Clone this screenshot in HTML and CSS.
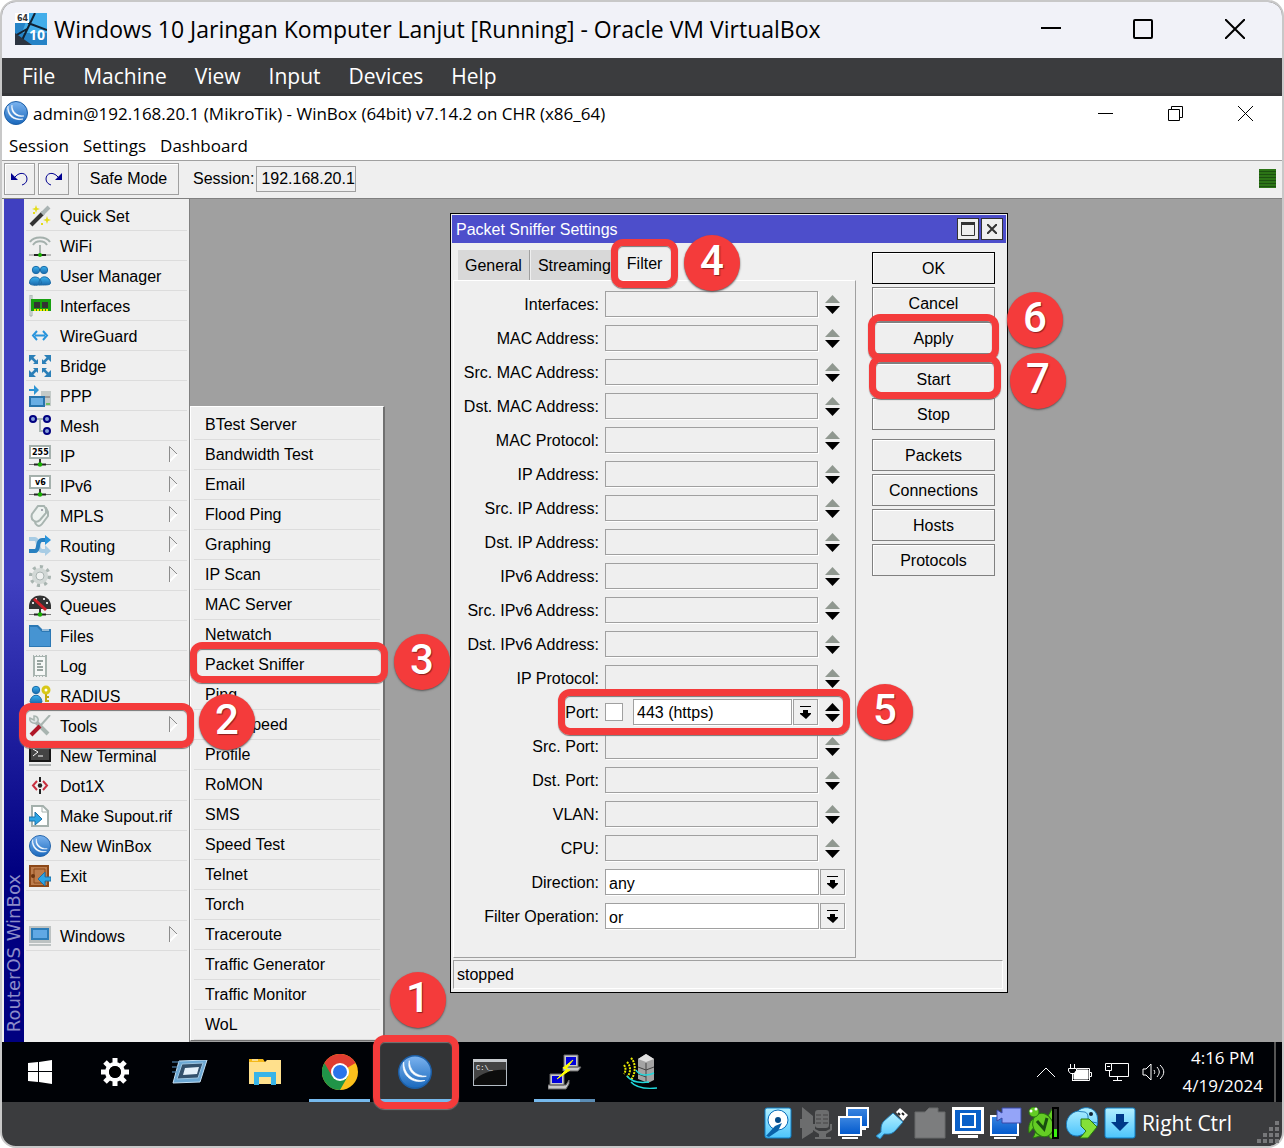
FILE: index.html
```html
<!DOCTYPE html>
<html lang="en">
<head>
    <meta charset="UTF-8">
    <meta name="viewport" content="width=device-width, initial-scale=1.0">
    <title>Packet Sniffer Settings</title>
    <link rel="stylesheet" href="styles.css">
</head>
<body>
    <!-- shared shapes -->
    <svg class="defs" aria-hidden="true">
        <defs>
            <linearGradient id="blue" x1="0" y1="0" x2="0" y2="1"><stop offset="0" stop-color="#3cb4f0"/><stop offset="1" stop-color="#1a68ac"/></linearGradient>
            <linearGradient id="orb" x1="0" y1="0" x2="0" y2="1"><stop offset="0" stop-color="#7cb4f0"/><stop offset="1" stop-color="#1a68bc"/></linearGradient>
            <linearGradient id="light" x1="0" y1="0" x2="0" y2="1"><stop offset="0" stop-color="#b4f0ff"/><stop offset="1" stop-color="#4cc4fc"/></linearGradient>
            <linearGradient id="screen" x1="0" y1="0" x2="0" y2="1"><stop offset="0" stop-color="#3c86e0"/><stop offset="1" stop-color="#0058cc"/></linearGradient>
        </defs>
        <symbol id="spin" viewBox="0 0 15 19">
            <path class="up" d="M7.500 0 15 8H0z"/><path d="M0 11h15L7.500 19z"/>
        </symbol>
        <symbol id="drop" viewBox="0 0 11 13">
            <path d="M0 0h11v1H0zM3 4h5v3h3v1l-5 5-6-5V7h3z"/>
        </symbol>
        <symbol id="more" viewBox="0 0 9 16">
            <path d="M8 8 .5 15.500" fill="none" stroke="#fff" stroke-width="2"/><path d="M.5 16V.5L8 8" fill="none" stroke="#8c8c8c"/>
        </symbol>
        <symbol id="winbox" viewBox="0 0 24 24">
            <circle cx="12" cy="12" r="11.500" fill="url(#orb)" stroke="#1c5ea6"/>
            <path d="M8 4c0 6 4 11 12 11-8 2-14-4-12-11zM4 5c0 8 6 14 15 13C9 21 2 13 4 5z" fill="#fff" stroke="#fff" stroke-width=".5"/>
        </symbol>
        <symbol id="node" viewBox="0 0 22 22">
            <path d="M11 14v5" stroke="#333" stroke-width="2"/><path d="M0 19.500h22" stroke="#777"/><path d="M5 19.500h12" stroke="#222" stroke-width="2"/><circle cx="11" cy="19.500" r="2.200" fill="#18b000"/>
        </symbol>
    </svg>

    <div class="vm">
        <header class="vm-title">
            <svg width="32" height="32" viewBox="0 0 32 32">
                <rect width="32" height="32" fill="#2583c7"/><path d="M14 0h18v20H7z" fill="#43aeea"/><path d="M20 0 9 23l-4 9M13 10l19 7M0 23l12-7" fill="none" stroke="#123" stroke-width="2"/><path d="M0 20 17 32H0z" fill="#2c3440"/>
                <rect width="14" height="10" fill="#fff"/><text x="2" y="8" font-size="8" font-weight="bold" font-family="DejaVu Sans" fill="#333">64</text><text x="14" y="27" font-size="14" font-weight="bold" font-family="Open Sans" fill="#fff">10</text>
            </svg>
            <h1>Windows 10 Jaringan Komputer Lanjut [Running] - Oracle VM VirtualBox</h1>
            <div class="vm-controls">
                <button type="button" aria-label="Minimize"><svg width="20" height="20"><path d="M0 9h20"/></svg></button>
                <button type="button" aria-label="Maximize"><svg width="20" height="20"><rect x="1" y="1" width="18" height="18" rx="1"/></svg></button>
                <button type="button" aria-label="Close"><svg width="20" height="20"><path d="m0 0 20 20M20 0 0 20"/></svg></button>
            </div>
        </header>
        <nav class="vm-menu">
            <a href="#">File</a><a href="#">Machine</a><a href="#">View</a><a href="#">Input</a><a href="#">Devices</a><a href="#">Help</a>
        </nav>

        <div class="wb-title">
            <svg width="24" height="24"><use href="#winbox"/></svg>
            <h2>admin@192.168.20.1 (MikroTik) - WinBox (64bit) v7.14.2 on CHR (x86_64)</h2>
            <div class="wb-controls">
                <button type="button" aria-label="Minimize"><svg width="15" height="15"><path d="M0 7.500h15"/></svg></button>
                <button type="button" aria-label="Restore"><svg width="15" height="15"><path d="M.5 3.500h11v11H.5zM3.500 3.500v-3h11v11h-3"/></svg></button>
                <button type="button" aria-label="Close"><svg width="15" height="15"><path d="m0 0 15 15M15 0 0 15"/></svg></button>
            </div>
        </div>
        <nav class="wb-menu">
            <a href="#">Session</a><a href="#">Settings</a><a href="#">Dashboard</a>
        </nav>
        <div class="toolbar">
            <button type="button" class="tool" aria-label="Undo"><svg width="17" height="14"><path d="M4 5c5-6 12-4 12 2 0 3-2 5-5 6" fill="none" stroke="#000090"/><path d="M0 1v7h7z" fill="#000090"/></svg></button>
            <button type="button" class="tool" aria-label="Redo"><svg width="17" height="14"><path d="M13 5C8-1 1 1 1 7c0 3 2 5 5 6" fill="none" stroke="#000090"/><path d="M17 1v7h-7z" fill="#000090"/></svg></button>
            <button type="button" class="safe">Safe Mode</button>
            <label for="session">Session:</label>
            <input type="text" id="session" value="192.168.20.1" readonly>
            <span class="load"></span>
        </div>

        <main class="workspace">
            <div class="brand"><span>RouterOS WinBox</span></div>
            <ul class="menu">
                <li><svg viewBox="0 0 22 22"><path d="m2 20 12-12" stroke="#333" stroke-width="4"/><path d="m13 9 7-7" stroke="#aab4b4" stroke-width="4"/><path d="m7 0 1 3 3 1-3 1-1 3-1-3-3-1 3-1zM18 11l1 3 3 1-3 1-1 3-1-3-3-1 3-1zM4 7h2v2H4zM12 18h2v2h-2z" fill="#e4dc18"/></svg><a href="#">Quick Set</a></li>
                <li><svg viewBox="0 0 22 22"><path d="M1 7c4-6 16-6 20 0M4 10c3-5 11-5 14 0" fill="none" stroke="#a4b0ac" stroke-width="2"/><path d="M11 10v9" stroke="#aab4b0" stroke-width="2"/><path d="M0 20h22" stroke="#888"/><path d="M5 20h12" stroke="#222" stroke-width="2"/><circle cx="11" cy="20" r="2" fill="#18b000"/></svg><a href="#">WiFi</a></li>
                <li><svg viewBox="0 0 22 22"><g fill="url(#blue)" stroke="#1c6ca8"><circle cx="7" cy="5" r="3.700"/><circle cx="15" cy="5" r="3.700"/><path d="M10 20c-1-11 11-10 11.500-2 0 2-3 2-11 2zM.5 18c0-8 11-8 12 0 0 3-12 3-12 0z"/></g></svg><a href="#">User Manager</a></li>
                <li><svg viewBox="0 0 22 22"><path d="M1 0h2v21H1z" fill="#dfe6e4" stroke="#a4b0ac"/><path d="M2 4h20v12H2z" fill="#18a010"/><path d="M5 7h6v6H5zM13 7h6v6h-6z" fill="#333"/><path d="M5 15h14" stroke="#f4e400" stroke-width="2" stroke-dasharray="2 1"/></svg><a href="#">Interfaces</a></li>
                <li><svg viewBox="0 0 22 22"><path d="M8 6 4 10.500 8 15M14 6l4 4.500-4 4.500M6 10.500h10" fill="none" stroke="#2894dc" stroke-width="2"/></svg><a href="#">WireGuard</a></li>
                <li><svg viewBox="0 0 22 22"><path d="m1 1 7 7M21 1l-7 7M1 21l7-7M21 21l-7-7" stroke="#2c80b8" stroke-width="2.500"/><path d="M0 0h7L0 7zM22 0v7l-7-7zM0 22v-7l7 7zM22 22h-7l7-7zM9 9H4l5-5zM13 9V4l5 5zM9 13v5l-5-5zM13 13h5l-5 5z" fill="#2c80b8"/></svg><a href="#">Bridge</a></li>
                <li><svg viewBox="0 0 22 22"><path d="M0 4h5V0l5 5-5 5V6H0z" fill="#2c94d4"/><path d="M12 6h10v15H12z" fill="#c4cac8"/><path d="M15 12h6" stroke="#999" stroke-width="2"/><path d="M17 19h4" stroke="#18b000"/><path d="M1 12h14v9H1z" fill="#68aee4" stroke="#2874ac" stroke-width="2"/></svg><a href="#">PPP</a></li>
                <li><svg viewBox="0 0 22 22"><path d="M4 4h14M11 4v12h7" fill="none" stroke="#a8b4b0" stroke-width="2"/><g fill="#86a0d8" stroke="#000080" stroke-width="2"><circle cx="4" cy="4" r="3"/><circle cx="18" cy="4" r="3"/><circle cx="18" cy="16" r="3"/></g></svg><a href="#">Mesh</a></li>
                <li><svg viewBox="0 0 22 22"><use href="#node"/><path d="M1 1h20v12H1z" fill="#fff" stroke="#a4b0ac" stroke-width="2"/><text x="3" y="10" class="tiny">255</text></svg><a href="#">IP</a><svg class="more"><use href="#more"/></svg></li>
                <li><svg viewBox="0 0 22 22"><use href="#node"/><path d="M1 1h20v12H1z" fill="#fff" stroke="#a4b0ac" stroke-width="2"/><text x="6" y="10" class="tiny">v6</text></svg><a href="#">IPv6</a><svg class="more"><use href="#more"/></svg></li>
                <li><svg viewBox="0 0 22 22"><g fill="#eef2f0" stroke="#a8b4b0" stroke-width="2"><path d="m6 14 7-11h4l2 4v4l-6 8c-3 4-8 1-7-5z"/><path d="M3 9 9 1h6l2 3v4l-6 7c-4 4-10 0-8-6z"/></g><circle cx="13" cy="5" r="1" fill="#889"/></svg><a href="#">MPLS</a><svg class="more"><use href="#more"/></svg></li>
                <li><svg viewBox="0 0 22 22"><path d="M0 4h6c4 0 2 12 7 12h5" fill="none" stroke="#a8cce4" stroke-width="4"/><path d="m16 10 6 6-6 5z" fill="#a8cce4"/><path d="M0 16h6c5 0 1-11 7-11h4" fill="none" stroke="#2880c0" stroke-width="4"/><path d="m16 0 6 5-6 5z" fill="#2894dc"/></svg><a href="#">Routing</a><svg class="more"><use href="#more"/></svg></li>
                <li><svg viewBox="0 0 22 22"><circle cx="11" cy="11" r="9" fill="none" stroke="#a8b4b0" stroke-width="4" stroke-dasharray="3 4"/><circle cx="11" cy="11" r="6" fill="none" stroke="#d2d8d6" stroke-width="4"/><circle cx="11" cy="11" r="4" fill="#eff1f0" stroke="#aab4b2"/></svg><a href="#">System</a><svg class="more"><use href="#more"/></svg></li>
                <li><svg viewBox="0 0 22 22"><use href="#node"/><path d="M0 14C-2-4 24-4 22 14z" fill="#333"/><path d="M3 8h2M6 4h2M14 4h2M17 8h2" stroke="#ddd" stroke-width="2"/><path d="m5 4 12 11" stroke="#d02028" stroke-width="3"/></svg><a href="#">Queues</a></li>
                <li><svg viewBox="0 0 22 22"><path d="M0 0h9l4 4h9v18H0z" fill="#2c78b4"/><path d="M1 2h7l5 5h8v14H1z" fill="#4694d2"/><path d="M13 5h7" stroke="#fff"/></svg><a href="#">Files</a></li>
                <li><svg viewBox="0 0 22 22"><path d="M5 1h12v20H5z" fill="#f6f8f7" stroke="#a8b4b0" stroke-width="2"/><path d="M5 0h12M5 22h12" stroke="#efefef" stroke-width="2" stroke-dasharray="2 1"/><path d="M8 6h6M8 9h4M8 12h6M8 15h6" stroke="#98a4a0" stroke-width="2"/></svg><a href="#">Log</a></li>
                <li><svg viewBox="0 0 22 22"><g fill="url(#blue)" stroke="#1c6ca8"><circle cx="7" cy="5" r="3.700"/><path d="M1 17c1-9 11-9 12 0 0 2-12 2-12 0z"/></g><path d="M17 8v9M17 12h3M17 16h3" stroke="#c0a810" stroke-width="2"/><circle cx="17" cy="5" r="3" fill="#fff" stroke="#d8c818" stroke-width="3"/></svg><a href="#">RADIUS</a></li>
                <li>
                    <svg viewBox="0 0 22 22"><path d="m7 7 12 12" stroke="#a8b4b0" stroke-width="4"/><path d="M5 1c4 0 6 5 2 7-4 1-7-2-6-5l4 2z" fill="#dfe6e4" stroke="#a8b4b0" stroke-width="1.500"/><path d="m21 0-9 10" stroke="#a8b4b0" stroke-width="2"/><path d="m2 20 9-9" stroke="#b01828" stroke-width="4"/></svg><a href="#">Tools</a><svg class="more"><use href="#more"/></svg>
                    <span class="ring ring-tools"></span><span class="step step-tools">2</span>
                </li>
                <li><svg viewBox="0 0 22 22"><path d="M0 19h22v2H0z" fill="#b0b4b4"/><path d="M1 1h20v15H1z" fill="#444" stroke="#181818" stroke-width="2"/><path d="m4 4 5 3-5 4M9 11h5" fill="none" stroke="#fff"/></svg><a href="#">New Terminal</a></li>
                <li><svg viewBox="0 0 22 22"><path d="M8 6 4 10.500 8 15M14 6l4 4.500-4 4.500" fill="none" stroke="#c83040" stroke-width="2"/><path d="M11 2v5M11 14v5" stroke="#222" stroke-width="2"/><circle cx="11" cy="10.500" r="2.200" fill="#222"/></svg><a href="#">Dot1X</a></li>
                <li><svg viewBox="0 0 22 22"><path d="M3 1h11l5 5v15H3z" fill="#fff" stroke="#a4b0ac" stroke-width="2"/><path d="M13 1v6h6" fill="none" stroke="#a4b0ac"/><path d="M0 12h6V7l7 7-7 6v-4H0z" fill="#2ca4e4" stroke="#1c70a8"/></svg><a href="#">Make Supout.rif</a></li>
                <li><svg viewBox="0 0 24 24"><use href="#winbox"/></svg><a href="#">New WinBox</a></li>
                <li><svg viewBox="0 0 22 22"><path d="M1 1h18v20H1z" fill="#bc7c4c" stroke="#8c4818" stroke-width="2"/><path d="M5 4h11v14H5z" fill="none" stroke="#8c4818"/><circle cx="4" cy="11" r="2" fill="#6c3410"/><path d="M22 12h-6V7l-7 7 7 7v-5h6z" fill="#2ca4e4" stroke="#1c70a8"/></svg><a href="#">Exit</a></li>
                <li></li>
                <li><svg viewBox="0 0 22 22"><path d="M0 1h22v17H0zM0 19h22v2H0z" fill="#bcc2c2"/><path d="M3 4h16v10H3z" fill="#60a8e4" stroke="#2c7cb8" stroke-width="2"/></svg><a href="#">Windows</a><svg class="more"><use href="#more"/></svg></li>
            </ul>

            <section class="desktop">
                <ul class="submenu">
                    <li><a href="#">BTest Server</a></li>
                    <li><a href="#">Bandwidth Test</a></li>
                    <li><a href="#">Email</a></li>
                    <li><a href="#">Flood Ping</a></li>
                    <li><a href="#">Graphing</a></li>
                    <li><a href="#">IP Scan</a></li>
                    <li><a href="#">MAC Server</a></li>
                    <li><a href="#">Netwatch</a></li>
                    <li><a href="#">Packet Sniffer</a><span class="ring ring-sniffer"></span><span class="step step-sniffer">3</span></li>
                    <li><a href="#">Ping</a></li>
                    <li><a href="#">Ping Speed</a></li>
                    <li><a href="#">Profile</a></li>
                    <li><a href="#">RoMON</a></li>
                    <li><a href="#">SMS</a></li>
                    <li><a href="#">Speed Test</a></li>
                    <li><a href="#">Telnet</a></li>
                    <li><a href="#">Torch</a></li>
                    <li><a href="#">Traceroute</a></li>
                    <li><a href="#">Traffic Generator</a></li>
                    <li><a href="#">Traffic Monitor</a></li>
                    <li><a href="#">WoL</a></li>
                </ul>

                <form class="dialog">
                    <div class="dialog-title">
                        <h3>Packet Sniffer Settings</h3>
                        <button type="button" aria-label="Maximize"><svg width="14" height="14"><path d="M.5 1v12.500h13V1" fill="none" stroke="#333"/><path d="M0 0h14v3H0z" fill="#333"/></svg></button>
                        <button type="button" aria-label="Close"><svg width="10" height="10"><path d="m0 0 10 10M10 0 0 10" stroke="#333" stroke-width="2"/></svg></button>
                    </div>
                    <div class="dialog-body">
                        <div class="sheet">
                            <div class="tabs">
                                <button type="button">General</button>
                                <button type="button">Streaming</button>
                                <div class="marked">
                                    <button type="button" class="active">Filter</button>
                                    <span class="ring ring-filter"></span><span class="step step-filter">4</span>
                                </div>
                            </div>
                            <div class="pane">
                                <div class="row"><label for="interfaces">Interfaces:</label><div class="field"><input type="text" id="interfaces"><button type="button" class="spin" aria-label="Add"><svg><use href="#spin"/></svg></button></div></div>
                                <div class="row"><label for="mac">MAC Address:</label><div class="field"><input type="text" id="mac"><button type="button" class="spin" aria-label="Add"><svg><use href="#spin"/></svg></button></div></div>
                                <div class="row"><label for="srcMac">Src. MAC Address:</label><div class="field"><input type="text" id="srcMac"><button type="button" class="spin" aria-label="Add"><svg><use href="#spin"/></svg></button></div></div>
                                <div class="row"><label for="dstMac">Dst. MAC Address:</label><div class="field"><input type="text" id="dstMac"><button type="button" class="spin" aria-label="Add"><svg><use href="#spin"/></svg></button></div></div>
                                <div class="row"><label for="macProto">MAC Protocol:</label><div class="field"><input type="text" id="macProto"><button type="button" class="spin" aria-label="Add"><svg><use href="#spin"/></svg></button></div></div>
                                <div class="row"><label for="ip">IP Address:</label><div class="field"><input type="text" id="ip"><button type="button" class="spin" aria-label="Add"><svg><use href="#spin"/></svg></button></div></div>
                                <div class="row"><label for="srcIp">Src. IP Address:</label><div class="field"><input type="text" id="srcIp"><button type="button" class="spin" aria-label="Add"><svg><use href="#spin"/></svg></button></div></div>
                                <div class="row"><label for="dstIp">Dst. IP Address:</label><div class="field"><input type="text" id="dstIp"><button type="button" class="spin" aria-label="Add"><svg><use href="#spin"/></svg></button></div></div>
                                <div class="row"><label for="ip6">IPv6 Address:</label><div class="field"><input type="text" id="ip6"><button type="button" class="spin" aria-label="Add"><svg><use href="#spin"/></svg></button></div></div>
                                <div class="row"><label for="srcIp6">Src. IPv6 Address:</label><div class="field"><input type="text" id="srcIp6"><button type="button" class="spin" aria-label="Add"><svg><use href="#spin"/></svg></button></div></div>
                                <div class="row"><label for="dstIp6">Dst. IPv6 Address:</label><div class="field"><input type="text" id="dstIp6"><button type="button" class="spin" aria-label="Add"><svg><use href="#spin"/></svg></button></div></div>
                                <div class="row"><label for="ipProto">IP Protocol:</label><div class="field"><input type="text" id="ipProto"><button type="button" class="spin" aria-label="Add"><svg><use href="#spin"/></svg></button></div></div>
                                <div class="row marked">
                                    <label for="port">Port:</label>
                                    <div class="field">
                                        <input type="checkbox" aria-label="Not">
                                        <input type="text" id="port" class="filled" value="443 (https)">
                                        <button type="button" class="drop" aria-label="Choose port"><svg><use href="#drop"/></svg></button>
                                        <button type="button" class="spin on" aria-label="Add"><svg><use href="#spin"/></svg></button>
                                    </div>
                                    <span class="ring ring-port"></span><span class="step step-port">5</span>
                                </div>
                                <div class="row"><label for="srcPort">Src. Port:</label><div class="field"><input type="text" id="srcPort"><button type="button" class="spin" aria-label="Add"><svg><use href="#spin"/></svg></button></div></div>
                                <div class="row"><label for="dstPort">Dst. Port:</label><div class="field"><input type="text" id="dstPort"><button type="button" class="spin" aria-label="Add"><svg><use href="#spin"/></svg></button></div></div>
                                <div class="row"><label for="vlan">VLAN:</label><div class="field"><input type="text" id="vlan"><button type="button" class="spin" aria-label="Add"><svg><use href="#spin"/></svg></button></div></div>
                                <div class="row"><label for="cpu">CPU:</label><div class="field"><input type="text" id="cpu"><button type="button" class="spin" aria-label="Add"><svg><use href="#spin"/></svg></button></div></div>
                                <div class="row"><label for="direction">Direction:</label><div class="field combo"><select id="direction"><option>any</option><option>rx</option><option>tx</option></select><button type="button" class="drop" aria-label="Open list"><svg><use href="#drop"/></svg></button></div></div>
                                <div class="row"><label for="operation">Filter Operation:</label><div class="field combo"><select id="operation"><option>or</option><option>and</option></select><button type="button" class="drop" aria-label="Open list"><svg><use href="#drop"/></svg></button></div></div>
                            </div>
                        </div>
                        <div class="actions">
                            <div class="group">
                                <button type="button" class="default">OK</button>
                                <button type="button">Cancel</button>
                                <div class="marked">
                                    <button type="button">Apply</button>
                                    <span class="ring ring-apply"></span><span class="step step-apply">6</span>
                                </div>
                            </div>
                            <div class="group">
                                <div class="marked">
                                    <button type="button">Start</button>
                                    <span class="ring ring-start"></span><span class="step step-start">7</span>
                                </div>
                                <button type="button">Stop</button>
                            </div>
                            <div class="group">
                                <button type="button">Packets</button>
                                <button type="button">Connections</button>
                                <button type="button">Hosts</button>
                                <button type="button">Protocols</button>
                            </div>
                        </div>
                    </div>
                    <div class="dialog-status">stopped</div>
                </form>
            </section>
        </main>

        <footer class="taskbar">
            <button type="button" class="task" aria-label="Start"><svg width="24" height="24" viewBox="0 0 24 24"><path d="m0 3 10-1v9H0zM11 2l13-2v11H11zM0 12h10v10L0 21zM11 12h13v12l-13-2z" fill="#fff"/></svg></button>
            <button type="button" class="task" aria-label="Settings"><svg width="28" height="28" viewBox="0 0 28 28"><circle cx="14" cy="14" r="8" fill="none" stroke="#fff" stroke-width="4"/><path d="M14 0v5M14 23v5M0 14h5M23 14h5M4 4l4 4M20 20l4 4M24 4l-4 4M8 20l-4 4" stroke="#fff" stroke-width="5"/><circle cx="14" cy="14" r="6" fill="#000"/></svg></button>
            <button type="button" class="task" aria-label="Run"><svg width="36" height="24" viewBox="0 0 36 24"><path d="m7 1 28-1-7 22-27 1z" fill="#6ca8d4" stroke="#c4e0f4"/><path d="m10 4 21-1-5 15-21 1z" fill="#32506c" stroke="#9cc4e0"/><path d="m13 8 14-1-2 7-14 1z" fill="#e4f0fa"/><path d="M0 2h8M0 7h6M0 12h5" stroke="#5c98c8"/></svg></button>
            <button type="button" class="task" aria-label="File Explorer"><svg width="32" height="28" viewBox="0 0 32 28"><path d="M0 1h14l2 3H0z" fill="#f4b818"/><path d="M0 4h16l2-2h14v24H0z" fill="#ffe08c"/><path d="M3 2h6" stroke="#fff"/><path d="M5 27V14h22v13h-5v-8H10v8z" fill="#38b4e8"/></svg></button>
            <button type="button" class="task open" aria-label="Chrome"><svg width="36" height="36" viewBox="0 0 36 36"><circle cx="18" cy="18" r="18" fill="#fcc01c"/><path d="M18 18 2.400 9A18 18 0 0 1 33.600 9z" fill="#e03c30"/><path d="M2.400 9A18 18 0 0 0 18 36l8-14-8-4z" fill="#209448"/><path d="M2.400 9 10 22l8-13z" fill="#e03c30"/><circle cx="18" cy="18" r="9" fill="#fff"/><circle cx="18" cy="18" r="7" fill="#2a74ea"/></svg></button>
            <div class="marked">
                <button type="button" class="task open active" aria-label="WinBox"><svg width="34" height="34"><use href="#winbox"/></svg></button>
                <span class="ring ring-winbox"></span><span class="step step-winbox">1</span>
            </div>
            <button type="button" class="task" aria-label="Command Prompt"><svg width="34" height="27" viewBox="0 0 34 27"><rect x=".5" y=".5" width="33" height="26" fill="#0c0c0c" stroke="#b4bcc4"/><path d="M0 0h34v3H0z" fill="#c8ccd0"/><path d="M14 3h19v8C20 10 8 14 1 22V3z" fill="#444"/><text x="3" y="11" font-size="7" font-family="Liberation Mono" fill="#fff">C:\_</text></svg></button>
            <button type="button" class="task open many" aria-label="PuTTY"><svg width="34" height="36" viewBox="0 0 34 36"><path d="M16 1h14v12H16zM15 13h18l-3 4H15zM2 20h14v11H2zM0 31h18l3-5v4l-3 5H0z" fill="#c8c8c8" stroke="#666"/><path d="M18 3h10v8H18zM4 22h10v7H4z" fill="#0000d8"/><path d="M25 6 15 14l4 1L9 25l13-9-4-1z" fill="#ff0" stroke="#ff0"/></svg></button>
            <button type="button" class="task" aria-label="IP Scanner"><svg width="34" height="36" viewBox="0 0 34 36"><path d="m15 5 8-5 8 5v21l-6 3-10-4z" fill="#a4a4a4"/><path d="m15 5 8 3 8-3-8-5z" fill="#e0e0e0"/><path d="M23 9v19M15 13l8 3 8-3M15 20l8 3" fill="none" stroke="#444"/><path d="M8 4c5 5 5 15 0 22M4 8c4 4 4 11 0 15M1 11c2 3 2 6 0 9" fill="none" stroke="#e8e800" stroke-width="2" stroke-dasharray="2 1"/><path d="M13 16c3 6 12 6 18 3M4 22c5 7 14 7 22 6M8 28c6 7 16 7 26 6" fill="none" stroke="#20d8dc" stroke-width="1.500"/></svg></button>
            <div class="tray">
                <svg width="18" height="10"><path d="m0 10 9-9 9 9"/></svg>
                <svg width="24" height="17"><path d="M2.500 0v4M6.500 0v4M.5 4.500h8V7l-2 2.500h-4L.5 7zM4.500 9v8M9 4.500h12.500v12H4M22 8.500h1.500v4H22"/><path d="M9 6h11v9H6v-5z" class="fill"/></svg>
                <svg width="24" height="18"><path d="M6.500.5h17v13h-19V8M.5.500h6v7h-6zM2 3.500h3M12.500 13v4M8 17.500h9"/></svg>
                <svg width="23" height="18"><path d="M1 6h3l5-5v16l-5-5H1zM12 7c1 2 1 3 0 4M15 4c3 4 3 6 0 10M18 2c5 5 5 9 0 14"/></svg>
                <time datetime="2024-04-19T16:16">4:16 PM<br>4/19/2024</time>
            </div>
        </footer>

        <div class="vm-status">
            <svg viewBox="0 0 32 32"><rect x="3" y="1" width="26" height="30" rx="2" fill="url(#light)" stroke="#0c7cc4"/><circle cx="16" cy="13" r="10" fill="#fff" stroke="#0a6cb8"/><circle cx="16" cy="13" r="3" fill="#044a88"/><path d="m4 29 9-10 7-3-4 8-9 6z" fill="#0a62a8"/></svg>
            <svg viewBox="0 0 32 32" fill="#6c6d6e"><path d="M2 0 13 9v16L2 32V21H0v-9h2z"/><rect x="15" y="3" width="14" height="18" rx="3"/><path d="M13 17v6l6 4v3h-4v2h16v-2h-5v-3l6-4v-6h-2v5l-4 2h-7l-4-2v-5z"/><path d="M16 8h5M23 8h5M16 12h5M23 12h5M16 16h5M23 16h5" stroke="#444"/></svg>
            <svg viewBox="0 0 32 32"><path d="M9 1h21v19H9z" fill="url(#screen)" stroke="#fff" stroke-width="2"/><path d="M13 22h15" stroke="#fff" stroke-width="2"/><path d="M1 10h22v18H1z" fill="url(#screen)" stroke="#fff" stroke-width="2"/><path d="M4 31h16" stroke="#fff" stroke-width="2"/></svg>
            <svg viewBox="0 0 32 32"><path d="m20 5 4-4 8 7-5 6z" fill="#fff"/><path d="m22 6 2 2M26 6l2 2" stroke="#222" stroke-width="2"/><path d="m17 6 10 9-8 9c-4 4-8 3-11 3l-4 5-4-3 5-4c0-4 0-8 3-11z" fill="url(#light)" stroke="#247cb4"/></svg>
            <svg viewBox="0 0 32 32"><path d="M1 5h10l4-4h9v4h7v26H1z" fill="#7c7d7e" stroke="#696a6b"/></svg>
            <svg viewBox="0 0 32 32"><path d="M0 0h32v27H0zM6 28h20v3H6z" fill="#fff"/><path d="M3 3h26v21H3z" fill="#0a60c8"/><path d="M9 7h14v13H9z" fill="none" stroke="#fff" stroke-width="2"/></svg>
            <svg viewBox="0 0 32 32"><path d="M1 9h27v19H1z" fill="url(#screen)" stroke="#fff" stroke-width="2"/><path d="M4 31h22" stroke="#fff" stroke-width="2"/><path d="M12 1h19v15H12v-5l-5 3V3l5 3z" fill="#94a4f8" stroke="#3848a8"/></svg>
            <svg viewBox="0 0 32 32"><g fill="#64cc24" stroke="#287810"><path d="M7 11C2 13 0 18 1 26l7-8zM20 9l4-7c3 0 5 2 6 5l-6 6zM8 24l-3 7 7-2zM20 28l3 4 3-2-1-6z"/><ellipse cx="15" cy="18" rx="10" ry="12" transform="rotate(-25 15 18)"/><circle cx="6" cy="5" r="5"/></g><circle cx="3" cy="4" r="1.500" fill="#fff"/><circle cx="8" cy="2" r="1.500" fill="#fff"/><path d="m9 14 7 8 3-11" fill="none" stroke="#184c10" stroke-width="3"/><path d="M25 1h5v30h-5z" fill="#333" stroke="#000" stroke-width="2"/><path d="M26 22h3v8h-3z" fill="#3cf010"/></svg>
            <svg viewBox="0 0 32 32"><path d="M12 29C-3 30-4 7 12 4c4-5 16-5 19 4 3 12-3 17-10 18z" fill="url(#light)" stroke="#1878b8"/><path d="M12 4c5 2 11-2 10 10l9 2" fill="none" stroke="#1878b8"/><circle cx="25" cy="7" r="2" fill="#123"/><path d="M15 12h8l8 8-9 11h-8l6-7-5-5z" fill="#84e038" stroke="#287810"/></svg>
            <svg viewBox="0 0 32 32"><rect x="1" y="1" width="30" height="30" rx="2" fill="url(#light)" stroke="#0c7cc4"/><path d="M12 7h8v8h5l-9 9-9-9h5z" fill="#003888"/></svg>
            <span>Right Ctrl</span>
            <svg class="grip" viewBox="0 0 24 24"><path d="M19 1h4v4h-4zM13 7h4v4h-4zM19 7h4v4h-4zM7 13h4v4H7zM13 13h4v4h-4zM19 13h4v4h-4zM1 19h4v4H1zM7 19h4v4H7zM13 19h4v4h-4zM19 19h4v4h-4z" fill="#77787a"/></svg>
        </div>
    </div>
</body>
</html>
```
FILE: styles.css
```css
* {
    box-sizing: border-box;
}
body {
    margin: 0;
    background-color: #fff;
    color: #000;
    font-family: "Liberation Sans", Arial, sans-serif;
    font-size: 16px;
}
h1, h2, h3, ul {
    margin: 0;
    padding: 0;
    font-weight: normal;
}
ul {
    list-style: none;
}
a {
    color: inherit;
    text-decoration: none;
}
button, input, select {
    margin: 0;
    padding: 0;
    border: 1px solid #a0a0a0;
    border-radius: 0;
    background-color: #efefef;
    color: #000;
    font: inherit;
}
button {
    display: flex;
    align-items: center;
    justify-content: center;
}
svg {
    display: block;
    flex: none;
}
.defs {
    position: absolute;
    width: 0;
    height: 0;
}

/* VirtualBox frame */
.vm {
    display: flex;
    flex-direction: column;
    min-height: 100vh;
    border: 2px solid #c8c8c8;
    border-radius: 16px;
    background-color: #3b3c3e;
}
.vm-title {
    display: flex;
    align-items: center;
    height: 56px;
    padding: 0 1px 2px 13px;
    border-radius: 14px 14px 0 0;
    background-color: #f1f2f8;
}
.vm-title h1 {
    flex: 1;
    margin-left: 7px;
    font-family: "Open Sans", sans-serif;
    font-size: 23px;
    white-space: nowrap;
}
.vm-controls, .wb-controls {
    display: flex;
}
.vm-controls button, .wb-controls button {
    height: 34px;
    border: none;
    background: none;
}
.vm-controls button {
    width: 92px;
}
.vm-controls svg, .wb-controls svg {
    fill: none;
    stroke: #000;
}
.vm-controls svg {
    stroke-width: 2;
}
.wb-controls button {
    width: 70px;
}
.vm-menu {
    display: flex;
    align-items: center;
    gap: 28px;
    height: 38px;
    padding-left: 20px;
    border-bottom: 3px solid #353638;
    color: #fff;
    font-family: "Open Sans", sans-serif;
    font-size: 21px;
}

/* WinBox header */
.wb-title {
    display: flex;
    align-items: center;
    height: 34px;
    padding: 0 2px;
    background-color: #fff;
    font-family: "Open Sans", sans-serif;
}
.wb-title h2 {
    flex: 1;
    margin-left: 5px;
    font-size: 17px;
    white-space: nowrap;
}
.wb-menu {
    display: flex;
    align-items: center;
    gap: 14px;
    height: 30px;
    padding-left: 7px;
    background-color: #fff;
    font-family: "Open Sans", sans-serif;
    font-size: 17px;
}
.toolbar {
    display: flex;
    align-items: center;
    height: 39px;
    padding: 0 6px 2px 2px;
    border-top: 1px solid #a0a0a0;
    border-bottom: 1px solid #808080;
    background-color: #efefef;
}
.toolbar button {
    height: 32px;
    box-shadow: inset 1px 1px #fff;
}
.toolbar .tool {
    width: 31px;
    margin-right: 3px;
}
.toolbar .safe {
    width: 101px;
    margin: 0 14px 0 6px;
}
.toolbar input {
    width: 100px;
    height: 26px;
    margin-left: 2px;
    padding-left: 4px;
}
.load {
    width: 17px;
    height: 19px;
    margin-left: auto;
    background: repeating-linear-gradient(#2c7416 0 2px, #1c5010 2px 3px);
}

/* side menu */
.workspace {
    display: flex;
    flex: 1;
    padding-left: 2px;
    background-color: #efefef;
}
.brand {
    display: flex;
    align-items: flex-end;
    justify-content: center;
    width: 20px;
    padding-bottom: 10px;
    background: linear-gradient(#4040c0 45%, #000080 80%);
    color: #8c8cc8;
    font-family: "DejaVu Sans", sans-serif;
    font-size: 18px;
    line-height: 20px;
}
.brand span {
    writing-mode: vertical-rl;
    transform: rotate(180deg);
    white-space: nowrap;
}
.menu {
    width: 165px;
    padding: 2px 2px 0;
}
.menu li, .submenu li {
    position: relative;
    display: flex;
    align-items: center;
    height: 30px;
    border-bottom: 1px solid #dcdcdc;
}
.menu li {
    padding: 0 9px 0 3px;
}
.menu li svg {
    width: 22px;
    height: 22px;
}
.menu li a {
    flex: 1;
    margin-left: 9px;
    padding-top: 2px;
    white-space: nowrap;
}
.menu li .more {
    width: 9px;
    height: 16px;
    margin-bottom: 4px;
}
.tiny {
    font-family: "DejaVu Sans", sans-serif;
    font-size: 8px;
    font-weight: bold;
}
.desktop {
    position: relative;
    flex: 1;
    border-left: 1px solid #808080;
    background-color: #a0a0a0;
}
.submenu {
    position: absolute;
    left: 0;
    bottom: 1px;
    width: 195px;
    padding: 3px 3px 0;
    border: 1px solid #fff;
    border-right: 2px solid #707070;
    border-bottom: 1px solid #707070;
    background-color: #efefef;
}
.submenu li {
    padding-left: 11px;
}

/* dialog */
.dialog {
    position: absolute;
    left: 260px;
    top: 14px;
    width: 558px;
    padding: 1px;
    border: 1px solid #000;
    background-color: #efefef;
}
.dialog-title {
    display: flex;
    align-items: center;
    gap: 2px;
    height: 28px;
    padding: 0 3px 0 4px;
    background-color: #4d4ecb;
    color: #fff;
}
.dialog-title h3 {
    flex: 1;
    padding-top: 2px;
    font-size: 16px;
}
.dialog-title button {
    width: 22px;
    height: 22px;
    border-color: #333;
}
.dialog-body {
    display: flex;
    padding-left: 1px;
}
.sheet {
    width: 403px;
    padding-top: 3px;
}
.tabs {
    display: flex;
    align-items: flex-end;
    gap: 1px;
    padding-left: 5px;
}
.tabs button {
    height: 30px;
    padding: 2px 7px 0;
    border: none;
    border-right: 1px solid #a0a0a0;
    background-color: #d8d8d8;
}
.tabs button:nth-child(2) {
    border-right: none;
    padding-right: 1px;
}
.tabs .marked .active {
    height: 34px;
    padding: 2px 14px 0;
    border: none;
    background-color: #efefef;
}
.pane {
    padding: 6px 0 24px;
    border: 1px solid #a0a0a0;
    border-top-color: #fff;
    border-left-color: #fff;
}
.row {
    display: grid;
    grid-template-columns: 145px 240px;
    gap: 6px;
    align-items: center;
    height: 34px;
    text-align: right;
}
.row label {
    padding-top: 2px;
}
.field {
    display: flex;
    align-items: center;
    gap: 2px;
}
.field input[type="text"], .field select {
    flex: 1;
    min-width: 0;
    height: 26px;
    padding: 2px 3px 0;
    box-shadow: 1px 1px #fff;
}
.field .filled, .field select {
    background-color: #fff;
}
.field select {
    appearance: none;
}
.field input[type="checkbox"] {
    appearance: none;
    width: 18px;
    height: 18px;
    margin-right: 8px;
    background-color: #fff;
}
.field .filled + .drop {
    margin-left: -1px;
}
.combo {
    gap: 1px;
}
.drop {
    width: 25px;
    height: 26px;
    box-shadow: 1px 1px #fff;
}
.drop svg {
    width: 11px;
    height: 13px;
}
.spin {
    width: 25px;
    height: 26px;
    border: none;
    background: none;
    color: #909890;
}
.spin.on {
    color: #000;
}
.spin svg {
    width: 15px;
    height: 19px;
}
.up {
    fill: currentColor;
}
.actions {
    display: flex;
    flex-direction: column;
    flex: 1;
    gap: 9px;
    padding: 9px 11px 0 16px;
}
.group {
    display: grid;
    gap: 3px;
}
.actions button {
    width: 100%;
    height: 32px;
    padding-top: 2px;
    border-color: #808080;
    box-shadow: inset 1px 1px #fff;
}
.actions .default {
    border-color: #000;
}
.dialog-status {
    height: 29px;
    margin: 2px 3px 2px 1px;
    padding-left: 3px;
    border: 1px solid #fff;
    border-top-color: #a0a0a0;
    border-left-color: #a0a0a0;
    line-height: 28px;
}

/* numbered steps */
.marked {
    position: relative;
}
.ring {
    position: absolute;
    z-index: 1;
    border: 7px solid #f43b3b;
    border-radius: 12px;
    box-shadow: 0 1px 1px #777, inset 0 1px 1px #777;
    pointer-events: none;
}
.step {
    position: absolute;
    z-index: 2;
    width: 56px;
    height: 56px;
    border-radius: 50%;
    background-color: #f43b3b;
    box-shadow: 0 1px 2px #555;
    color: #fff;
    font-family: Roboto, sans-serif;
    font-size: 42px;
    font-weight: 500;
    line-height: 52px;
    text-align: center;
    text-shadow: 1px 1px 1px #8c2020;
}
.ring-tools {
    inset: -8px -7px;
}
.step-tools {
    left: 173px;
    top: -17px;
}
.ring-sniffer {
    inset: -8px -8px -4px -4px;
}
.step-sniffer {
    left: 200px;
    top: -16px;
}
.ring-filter {
    inset: -7px -2px -8px -2px;
}
.step-filter {
    left: 71px;
    top: -11px;
}
.ring-port {
    inset: -6px 5px -6px 104px;
}
.step-port {
    left: 403px;
    top: -11px;
}
.ring-apply {
    inset: -8px -4px -7px -4px;
}
.step-apply {
    left: 135px;
    top: -30px;
}
.ring-start {
    inset: -8px -6px -4px -3px;
}
.step-start {
    left: 138px;
    top: -10px;
}
.ring-winbox {
    inset: -7px -7px -7px -4px;
}
.step-winbox {
    left: 13px;
    top: -70px;
}

/* guest taskbar */
.taskbar {
    display: flex;
    height: 60px;
    background-color: #000206;
}
.task {
    position: relative;
    width: 75px;
    height: 60px;
    border: none;
    background: none;
}
.task.active {
    background-color: #333436;
}
.task.open::after {
    content: "";
    position: absolute;
    left: 7px;
    right: 7px;
    bottom: 0;
    height: 3px;
    background-color: #76b9ed;
}
.task.active::after {
    left: 0;
    right: 0;
}
.task.many::after {
    background: linear-gradient(90deg, #76b9ed 75%, #5a8cb4 75%);
}
.tray {
    display: flex;
    align-items: center;
    gap: 13px;
    margin-left: auto;
    margin-right: 6px;
    padding-right: 11px;
    border-right: 2px solid #555;
    color: #fff;
    font-family: "Open Sans", sans-serif;
    font-size: 17px;
    line-height: 28px;
    text-align: center;
}
.tray svg {
    fill: none;
    stroke: #fff;
}
.tray .fill {
    fill: #fff;
}
.tray time {
    margin-left: 4px;
}

/* VirtualBox status bar */
.vm-status {
    display: flex;
    align-items: center;
    justify-content: flex-end;
    gap: 6px;
    height: 44px;
    padding: 0 2px 2px 0;
    color: #fff;
    font-family: "Open Sans", sans-serif;
    font-size: 21px;
}
.vm-status svg {
    width: 32px;
    height: 32px;
}
.vm-status .grip {
    width: 24px;
    height: 24px;
    margin-left: 18px;
    align-self: flex-end;
}
```
